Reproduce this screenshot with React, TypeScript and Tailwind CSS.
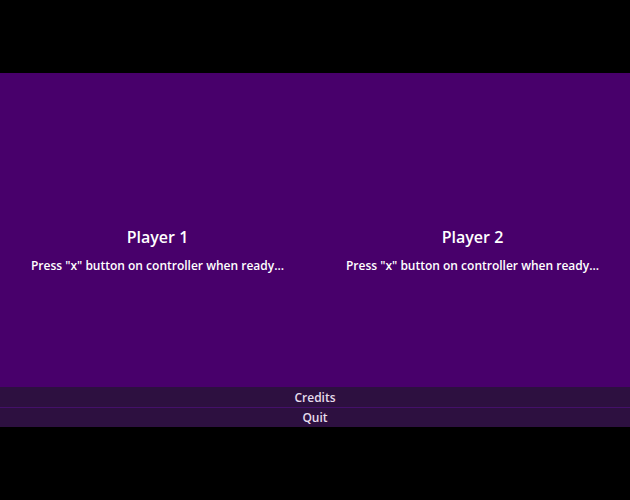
export default function App() {
  const font = { fontFamily: '"Open Sans", "Noto Sans", sans-serif' };
  return (
    <div className="w-[630px] h-[500px] bg-black flex flex-col" style={font}>
      <div className="h-[73px]" />
      <div className="h-[314px] bg-[#48006b] grid grid-cols-2 pt-[152px] text-white">
        {["Player 1", "Player 2"].map((p) => (
          <div key={p} className="flex flex-col items-center">
            <div className="text-[16px] font-semibold leading-[24px]">{p}</div>
            <div className="mt-[8px] text-[12px] font-semibold leading-[18px]">
              Press "x" button on controller when ready...
            </div>
          </div>
        ))}
      </div>
      <div className="h-[20px] pt-[2px] bg-[#2d1040] text-[#e6dcec] text-[12px] font-semibold flex items-center justify-center leading-none">
        Credits
      </div>
      <div className="h-[1px] bg-[#44106a]" />
      <div className="h-[19px] pt-[1px] bg-[#2d1040] text-[#e6dcec] text-[12px] font-semibold flex items-center justify-center leading-none">
        Quit
      </div>
    </div>
  );
}
